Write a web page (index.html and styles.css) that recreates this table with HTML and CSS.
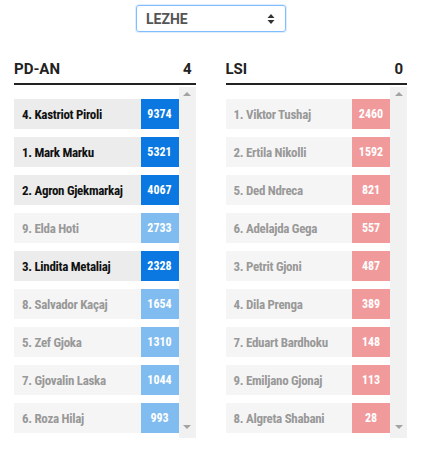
FILE: index.html
```html
<!DOCTYPE html>
<html>
<head>
<meta charset="utf-8">
<link rel="stylesheet" href="styles.css">
</head>
<body>
<div class="top">
  <div class="select"><span>LEZHE</span><svg class="sel-arrows" width="8" height="10" viewBox="0 0 8 10"><path d="M4 0 L7.5 4 H0.5 Z M4 10 L7.5 6 H0.5 Z" fill="#333"/></svg></div>
</div>
<div class="cols">
  <div class="col blue">
    <div class="head"><span>PD-AN</span><span>4</span></div>
    <div class="box">
      <div class="list">
        <div class="row on"><span class="name">4. Kastriot Piroli</span><span class="num">9374</span></div>
        <div class="row on"><span class="name">1. Mark Marku</span><span class="num">5321</span></div>
        <div class="row on"><span class="name">2. Agron Gjekmarkaj</span><span class="num">4067</span></div>
        <div class="row"><span class="name">9. Elda Hoti</span><span class="num">2733</span></div>
        <div class="row on"><span class="name">3. Lindita Metaliaj</span><span class="num">2328</span></div>
        <div class="row"><span class="name">8. Salvador Kaçaj</span><span class="num">1654</span></div>
        <div class="row"><span class="name">5. Zef Gjoka</span><span class="num">1310</span></div>
        <div class="row"><span class="name">7. Gjovalin Laska</span><span class="num">1044</span></div>
        <div class="row"><span class="name">6. Roza Hilaj</span><span class="num">993</span></div>
      </div>
      <div class="sb"><i class="up"></i><i class="down"></i></div>
    </div>
  </div>
  <div class="col red">
    <div class="head"><span>LSI</span><span>0</span></div>
    <div class="box">
      <div class="list">
        <div class="row"><span class="name">1. Viktor Tushaj</span><span class="num">2460</span></div>
        <div class="row"><span class="name">2. Ertila Nikolli</span><span class="num">1592</span></div>
        <div class="row"><span class="name">5. Ded Ndreca</span><span class="num">821</span></div>
        <div class="row"><span class="name">6. Adelajda Gega</span><span class="num">557</span></div>
        <div class="row"><span class="name">3. Petrit Gjoni</span><span class="num">487</span></div>
        <div class="row"><span class="name">4. Dila Prenga</span><span class="num">389</span></div>
        <div class="row"><span class="name">7. Eduart Bardhoku</span><span class="num">148</span></div>
        <div class="row"><span class="name">9. Emiljano Gjonaj</span><span class="num">113</span></div>
        <div class="row"><span class="name">8. Algreta Shabani</span><span class="num">28</span></div>
      </div>
      <div class="sb"><i class="up"></i><i class="down"></i></div>
    </div>
  </div>
</div>
</body>
</html>
```
FILE: styles.css
```css
* { box-sizing: border-box; }
body {
  margin: 0;
  background: #fff;
  font-family: Roboto, "Liberation Sans", sans-serif;
  color: #222;
}
.top {
  display: flex;
  justify-content: flex-start;
  padding: 5px 0 0 136px;
}
.select {
  width: 150px;
  height: 27px;
  border: 1px solid #80bdff;
  border-radius: 3px;
  box-shadow: 0 0 0 1px rgba(128,189,255,0.25);
  display: flex;
  align-items: center;
  justify-content: space-between;
  padding: 0 10px 0 9px;
  font-weight: bold;
  font-size: 14px;
  color: #555;
}
.cols {
  display: flex;
  gap: 30px;
  padding: 29px 15px 0 14px;
}
.col { flex: 1; }
.head {
  display: flex;
  justify-content: space-between;
  align-items: flex-end;
  font-weight: bold;
  font-size: 15px;
  color: #222;
  padding: 0 0 5px 0;
  border-bottom: 2px solid #222;
  line-height: 17px;
}
.head span:last-child { padding-right: 4px; }
.box {
  display: flex;
  margin-top: 2px;
  height: 351px;
}
.list {
  flex: 1;
  padding-top: 12px;
  display: flex;
  flex-direction: column;
  gap: 8px;
}
.row {
  display: flex;
  height: 30px;
  background: #f5f5f5;
  align-items: stretch;
}
.row.on { background: #ececec; }
.name {
  flex: 1;
  display: flex;
  align-items: center;
  padding-left: 8px;
  font-family: "Roboto Condensed", "DejaVu Sans Condensed", Roboto, sans-serif;
  font-stretch: condensed;
  font-weight: bold;
  font-size: 13px;
  letter-spacing: -0.3px;
  color: #999;
}
.row.on .name { color: #111; }
.num {
  width: 38px;
  display: flex;
  align-items: center;
  justify-content: center;
  font-family: "Roboto Condensed", "DejaVu Sans Condensed", Roboto, sans-serif;
  font-stretch: condensed;
  font-weight: bold;
  font-size: 12px;
  color: #fff;
}
.blue .num { background: #80bcf0; }
.blue .row.on .num { background: #0a78e0; }
.red .num { background: #f19a9b; }
.sb {
  width: 17px;
  background: #f1f1f1;
  display: flex;
  flex-direction: column;
  justify-content: space-between;
  align-items: center;
  padding: 5px 0 9px;
}
.sb i {
  width: 0; height: 0;
  border-left: 4px solid transparent;
  border-right: 4px solid transparent;
}
.sb .up { border-bottom: 4px solid #a3a3a3; }
.sb .down { border-top: 4px solid #a3a3a3; }
```
